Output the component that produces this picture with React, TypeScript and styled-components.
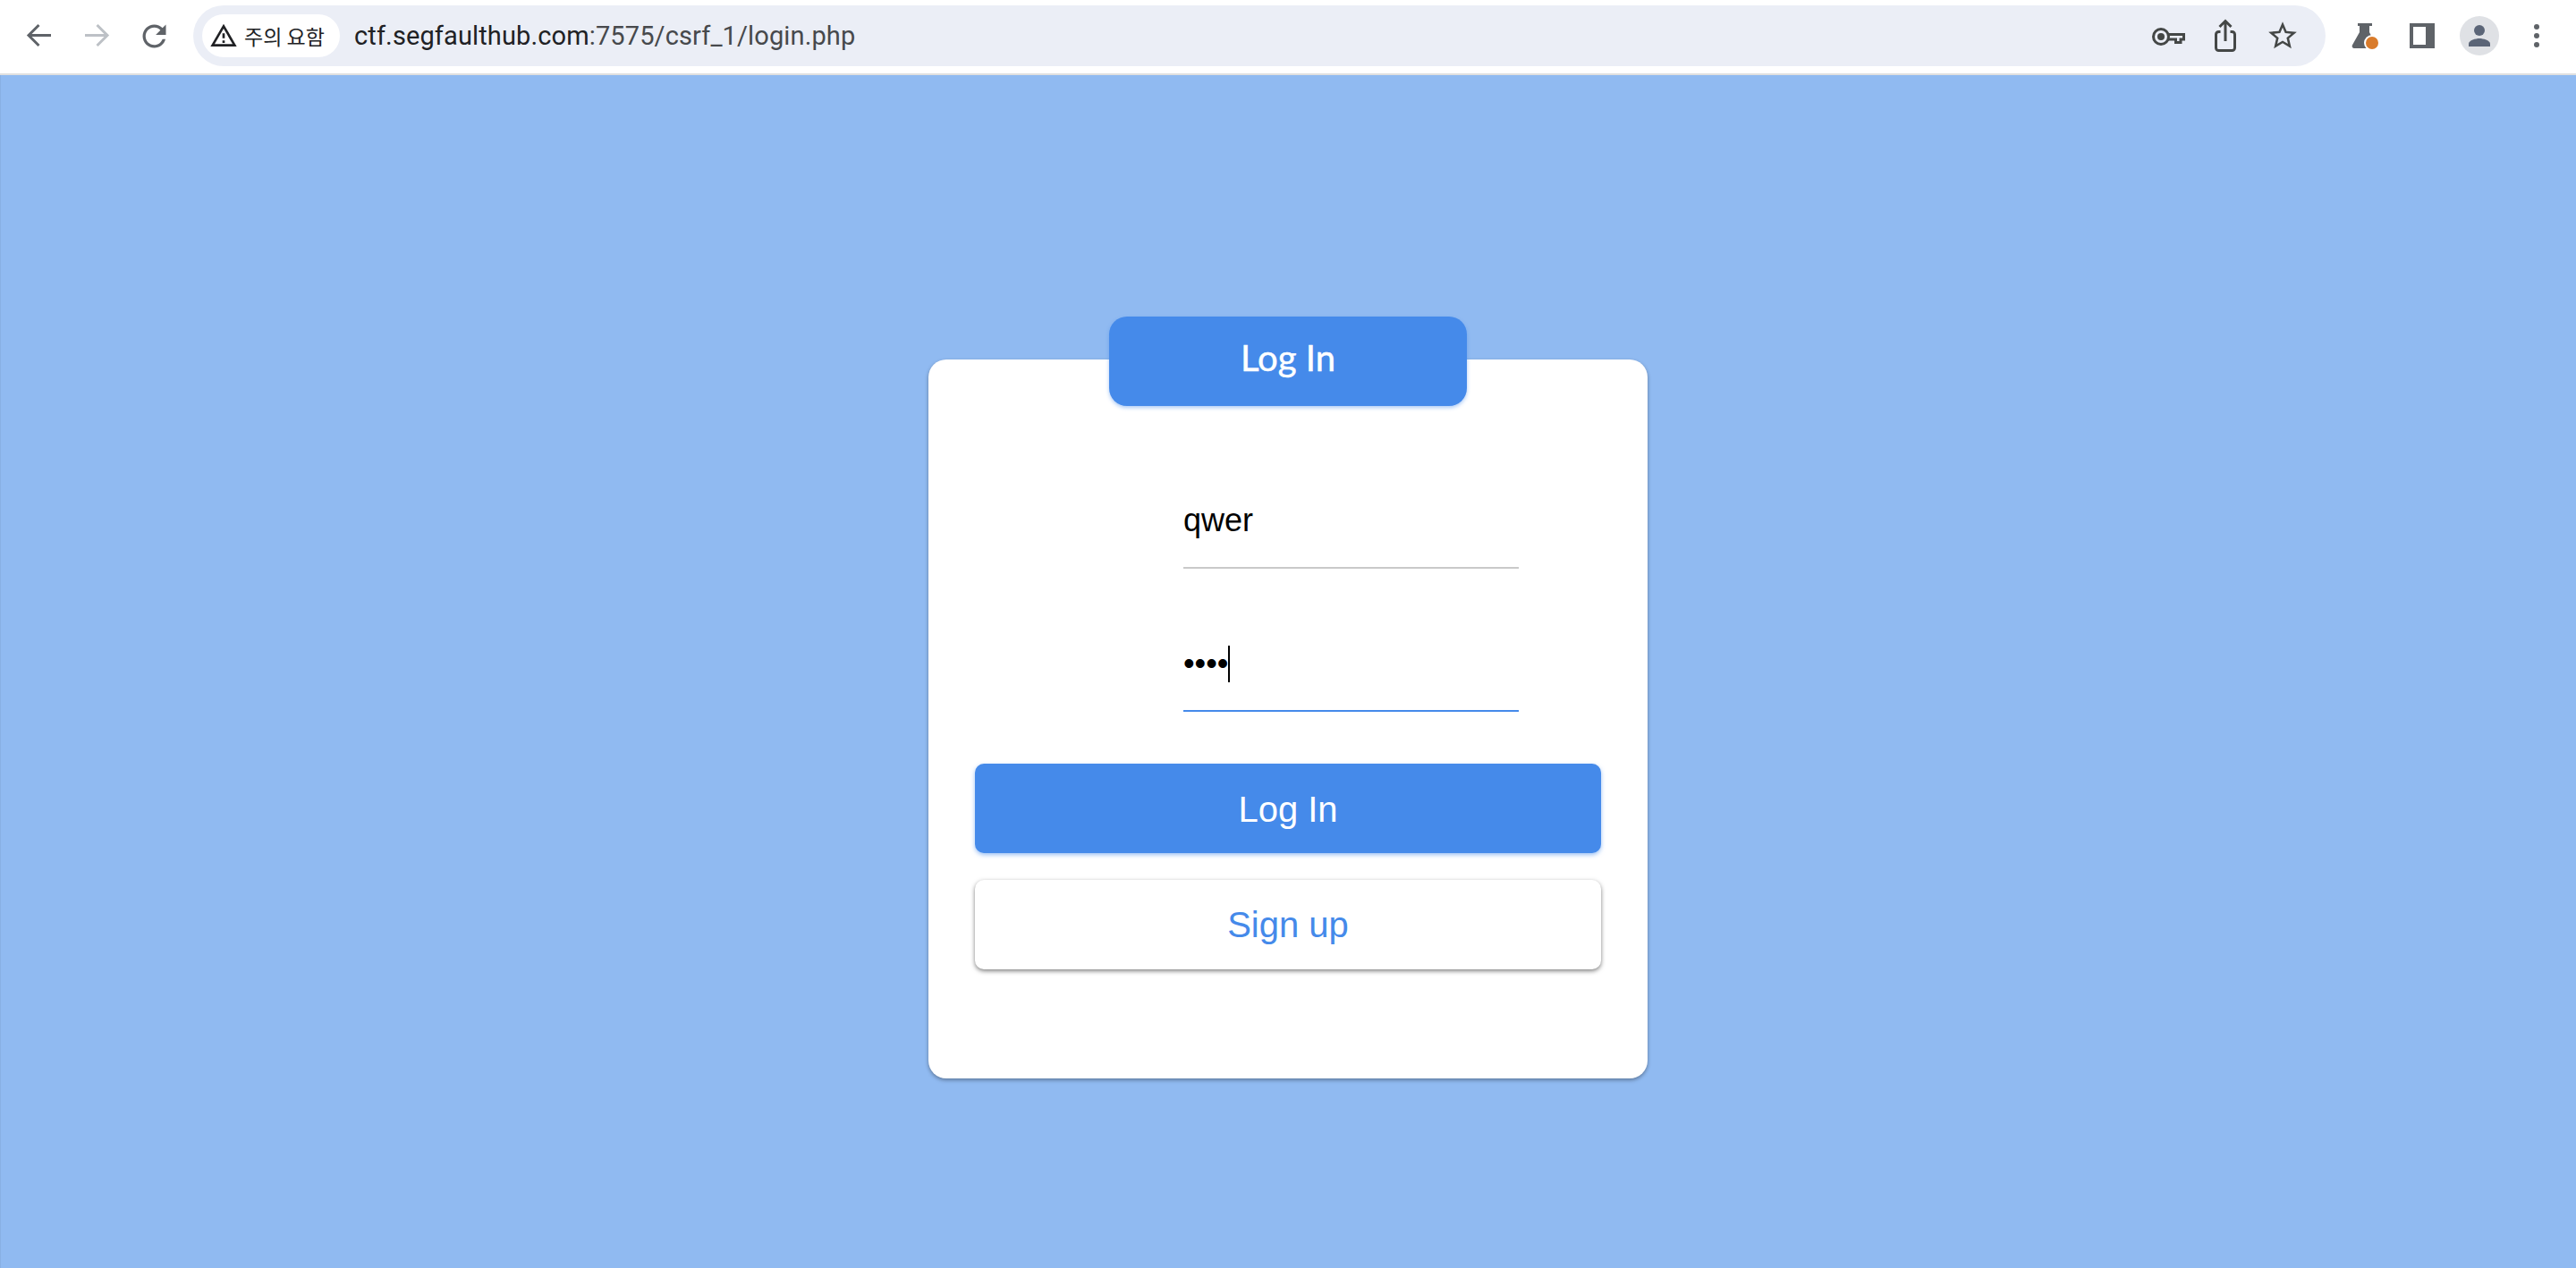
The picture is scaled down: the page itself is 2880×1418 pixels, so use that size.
import React from 'react';
import styled, { createGlobalStyle } from 'styled-components';

const GlobalStyle = createGlobalStyle`
	html, body {
		margin: 0;
		padding: 0;
		height: 100%;
		background: #90baf1;
	}
	* {
		box-sizing: border-box;
	}
`;

const Page = styled.div`
	display: flex;
	flex-direction: column;
	width: 2880px;
	height: 1418px;
	overflow: hidden;
`;

const Toolbar = styled.header`
	display: flex;
	align-items: center;
	height: 84px;
	padding: 0 12px 2px;
	background: #fff;
	border-bottom: 2px solid #e0e0e0;
`;

const IconGroup = styled.div`
	display: flex;
	align-items: center;
	flex-shrink: 0;
`;

const IconSlot = styled.span`
	display: flex;
	align-items: center;
	justify-content: center;
	width: 64px;
	height: 64px;
`;

const Omnibox = styled.div`
	display: flex;
	align-items: center;
	flex: 1;
	height: 68px;
	margin: 0 12px;
	padding: 0 16px 0 10px;
	background: #ebeef6;
	border-radius: 34px;
`;

const SecurityChip = styled.div`
	display: flex;
	align-items: center;
	gap: 7px;
	width: 154px;
	height: 48px;
	padding-left: 8px;
	background: #fff;
	border-radius: 24px;
	color: #202124;
	font: 23px "Noto Sans CJK KR", sans-serif;
	white-space: nowrap;
`;

const Url = styled.div`
	flex: 1;
	margin-left: 16px;
	color: #202124;
	font: 29px Roboto, sans-serif;
	letter-spacing: 0.12px;

	span {
		color: #47494c;
	}
`;

const Main = styled.main`
	display: flex;
	flex: 1;
	justify-content: center;
	padding-top: 318px;
	box-shadow: inset 1px 0 0 rgba(0, 0, 0, 0.05);
`;

const Card = styled.section`
	display: flex;
	flex-direction: column;
	align-items: center;
	width: 804px;
	height: 804px;
	background: #fff;
	border-radius: 20px;
	box-shadow: 0 2px 4px rgba(0, 0, 0, 0.35);
`;

const CardHeader = styled.h1`
	display: flex;
	align-items: center;
	justify-content: center;
	width: 400px;
	height: 100px;
	margin: -48px 0 0;
	padding-bottom: 8px;
	background: #458aea;
	border-radius: 20px;
	box-shadow: 0 2px 4px rgba(69, 138, 234, 0.45);
	color: #fff;
	font: 400 40px Lato, sans-serif;
	-webkit-text-stroke: 0.5px #fff;
`;

const Form = styled.form`
	display: flex;
	flex-direction: column;
	width: 700px;
	margin-top: 76px;
`;

const FieldGroup = styled.div`
	display: flex;
	flex-direction: column;
	gap: 54px;
	margin: 0 0 58px 233px;
`;

const Field = styled.div`
	position: relative;
	width: 375px;
	height: 106px;
`;

const TextInput = styled.input<{ $focused?: boolean }>`
	display: block;
	width: 100%;
	height: 100%;
	padding: 0;
	border: 0;
	border-bottom: 2px solid ${(p) => (p.$focused ? '#458aea' : '#c9c9c9')};
	outline: none;
	background: transparent;
	color: #000;
	font: 36px "Liberation Sans", Arial, sans-serif;
`;

const Caret = styled.i`
	position: absolute;
	left: 50px;
	top: 32px;
	width: 2px;
	height: 41px;
	background: #000;
`;

const ActionButton = styled.button<{ $primary?: boolean }>`
	display: block;
	width: 100%;
	height: 100px;
	margin-bottom: 30px;
	padding: ${(p) => (p.$primary ? '3px 0 0' : '0')};
	border: 0;
	border-radius: 10px;
	background: ${(p) => (p.$primary ? '#458aea' : '#fff')};
	box-shadow: ${(p) => (p.$primary ? '0 2px 5px rgba(69, 138, 234, 0.55)' : '0 2px 5px rgba(0, 0, 0, 0.5)')};
	color: ${(p) => (p.$primary ? '#fff' : '#458aea')};
	font: 40px "Liberation Sans", Arial, sans-serif;
`;

const BackIcon = ({ color }: { color: string }) => (
	<svg width="40" height="40" viewBox="0 0 40 40" fill="none" stroke={color} strokeWidth="3">
		<path d="M33 19.5H10M19.500 8 8 19.500 19.500 31" />
	</svg>
);

const ForwardIcon = ({ color }: { color: string }) => (
	<svg width="40" height="40" viewBox="0 0 40 40" fill="none" stroke={color} strokeWidth="3">
		<path d="M7 19.5h23M20.500 8 32 19.500 20.500 31" />
	</svg>
);

const ReloadIcon = () => (
	<svg width="39" height="39" viewBox="0 0 24 24" fill="#5f6368">
		<path d="M17.65 6.35C16.2 4.9 14.21 4 12 4c-4.42 0-7.99 3.58-7.99 8s3.57 8 7.99 8c3.73 0 6.84-2.55 7.73-6h-2.08c-.82 2.33-3.04 4-5.65 4-3.31 0-6-2.69-6-6s2.69-6 6-6c1.66 0 3.14.69 4.22 1.78L13 11h7V4l-2.35 2.35z" />
	</svg>
);

const WarningIcon = () => (
	<svg width="32" height="32" viewBox="0 0 24 24" fill="#202124">
		<path d="M12 5.99L19.53 19H4.47L12 5.99M12 2L1 21h22L12 2zm1 14h-2v2h2v-2zm0-6h-2v4h2v-4z" />
	</svg>
);

const KeyIcon = () => (
	<svg width="40" height="40" viewBox="0 0 40 40" fill="none" stroke="#444746" strokeWidth="3">
		<circle cx="12" cy="21" r="8.500" />
		<circle cx="12" cy="21" r="4" fill="#444746" stroke="none" />
		<path d="M20 18.500H37.500V24H34V27.500H28.500V24H20" />
	</svg>
);

const ShareIcon = () => (
	<svg width="40" height="40" viewBox="0 0 40 40" fill="none" stroke="#444746" strokeWidth="3">
		<path d="M14.500 15.500H12.500a3 3 0 0 0-3 3v15a3 3 0 0 0 3 3h15a3 3 0 0 0 3-3v-15a3 3 0 0 0-3-3H25.500" />
		<path d="M20 26V4M13.500 10 20 3.500 26.500 10" />
	</svg>
);

const StarIcon = () => (
	<svg width="38" height="38" viewBox="0 0 24 24" fill="#444746">
		<path d="M22 9.24l-7.19-.62L12 2 9.190 8.630 2 9.240l5.460 4.730L5.820 21 12 17.270 18.180 21l-1.630-7.030L22 9.240zM12 15.400l-3.760 2.270 1-4.280-3.320-2.880 4.380-.38L12 6.100l1.710 4.040 4.380.38-3.320 2.880 1 4.280L12 15.400z" />
	</svg>
);

const FlaskIcon = () => (
	<svg width="40" height="40" viewBox="0 0 40 40">
		<path fill="#5f6368" d="M12 6h16v3h-3v7l9 18H8a2.500 2.500 0 0 1-2-3.800L14 16V9h-2z" />
		<circle cx="28" cy="28" r="9" fill="#fff" />
		<circle cx="28" cy="28" r="7" fill="#d97b2b" />
	</svg>
);

const SidePanelIcon = () => (
	<svg width="40" height="40" viewBox="0 0 40 40">
		<path fill="#5f6368" fillRule="evenodd" d="M6 6h28v28H6zm4 4v20h14V10z" />
	</svg>
);

const AvatarIcon = () => (
	<svg width="44" height="44" viewBox="0 0 44 44">
		<circle cx="22" cy="22" r="22" fill="#dfe1e5" />
		<circle cx="22" cy="16" r="6" fill="#5b6577" />
		<path fill="#5b6577" d="M10 34v-3c0-4 8-6 12-6s12 2 12 6v3z" />
	</svg>
);

const MenuIcon = () => (
	<svg width="40" height="40" viewBox="0 0 40 40" fill="#5f6368">
		<circle cx="20" cy="10" r="3" />
		<circle cx="20" cy="20" r="3" />
		<circle cx="20" cy="30" r="3" />
	</svg>
);

const App = () => {
	return (
		<Page>
			<GlobalStyle />
			<Toolbar>
				<IconGroup>
					<IconSlot><BackIcon color="#5f6368" /></IconSlot>
					<IconSlot><ForwardIcon color="#bdc1c6" /></IconSlot>
					<IconSlot><ReloadIcon /></IconSlot>
				</IconGroup>
				<Omnibox>
					<SecurityChip>
						<WarningIcon />
						주의 요함
					</SecurityChip>
					<Url>ctf.segfaulthub.com<span>:7575/csrf_1/login.php</span></Url>
					<IconGroup>
						<IconSlot><KeyIcon /></IconSlot>
						<IconSlot><ShareIcon /></IconSlot>
						<IconSlot><StarIcon /></IconSlot>
					</IconGroup>
				</Omnibox>
				<IconGroup>
					<IconSlot><FlaskIcon /></IconSlot>
					<IconSlot><SidePanelIcon /></IconSlot>
					<IconSlot><AvatarIcon /></IconSlot>
					<IconSlot><MenuIcon /></IconSlot>
				</IconGroup>
			</Toolbar>
			<Main>
				<Card>
					<CardHeader>Log In</CardHeader>
					<Form>
						<FieldGroup>
							<Field>
								<TextInput type="text" defaultValue="qwer" readOnly />
							</Field>
							<Field>
								<TextInput type="password" defaultValue="qwer" readOnly $focused />
								<Caret />
							</Field>
						</FieldGroup>
						<ActionButton type="button" $primary>Log In</ActionButton>
						<ActionButton type="button">Sign up</ActionButton>
					</Form>
				</Card>
			</Main>
		</Page>
	);
};

export default App;
